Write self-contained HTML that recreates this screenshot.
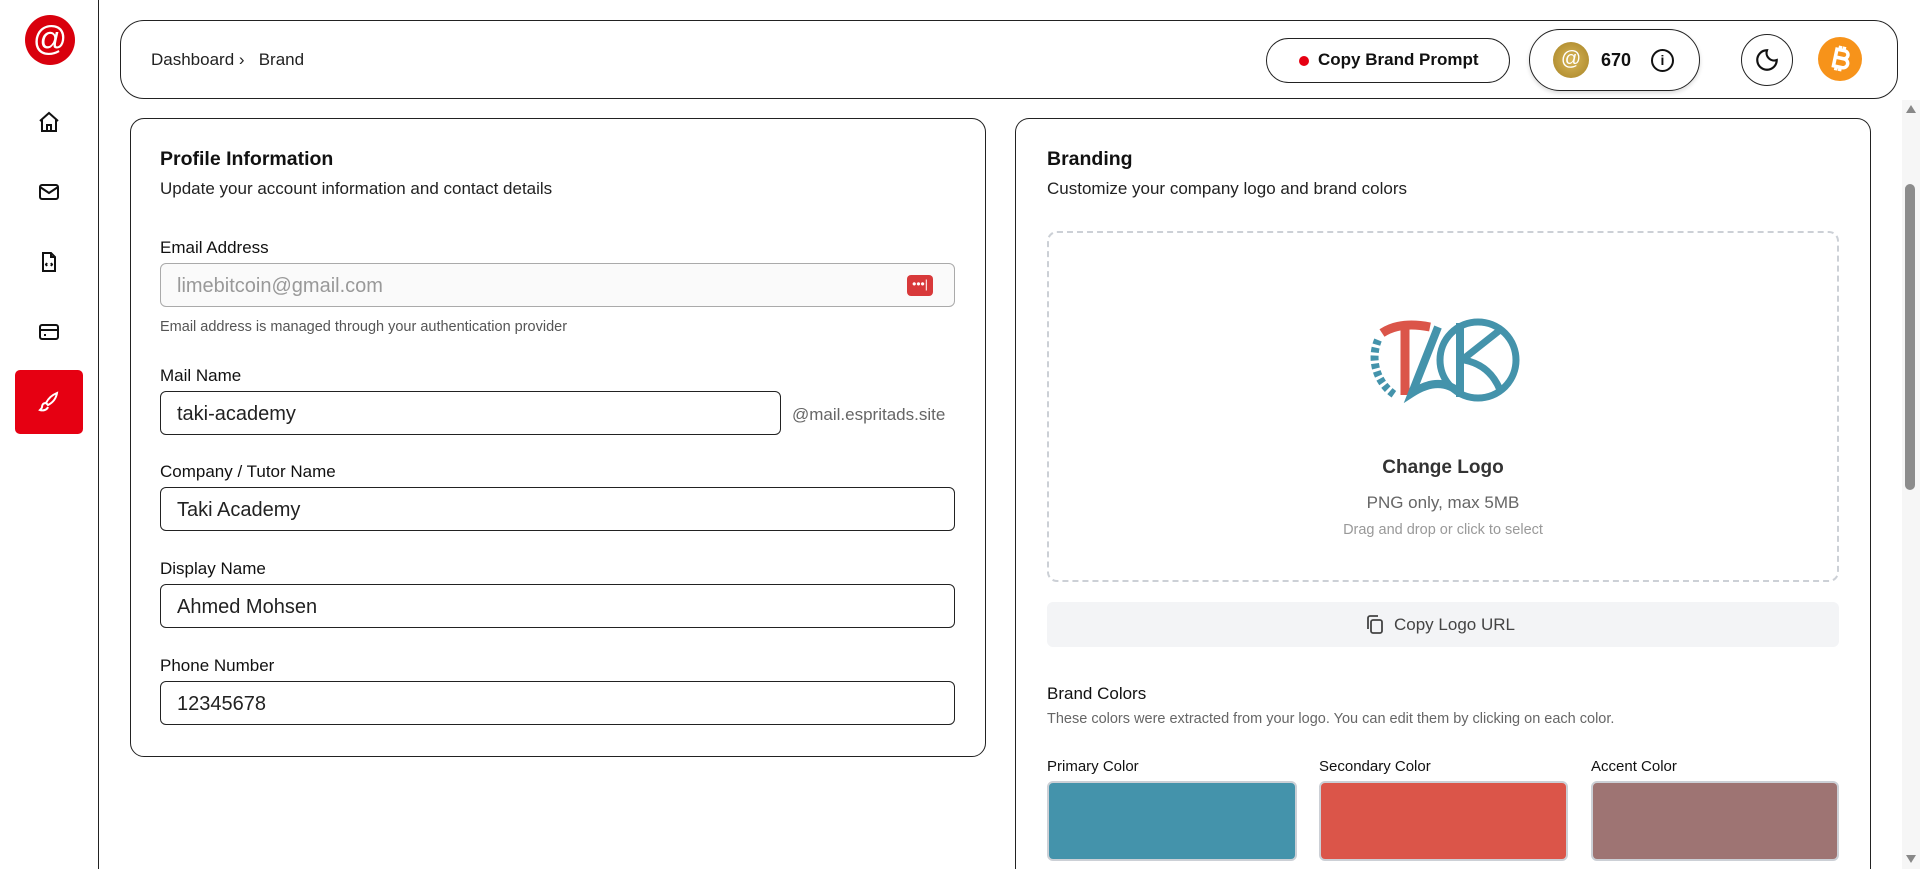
<!DOCTYPE html>
<html><head><meta charset="utf-8"><style>
*{box-sizing:border-box;margin:0;padding:0}
html,body{width:1920px;height:869px;overflow:hidden}
body{background:#fff;font-family:"Liberation Sans",sans-serif;color:#111;position:relative}
.abs{position:absolute}
.side{left:0;top:0;width:99px;height:869px;border-right:1.5px solid #222}
.ico{position:absolute;left:37px;width:24px;height:24px}
.hdr{left:120px;top:20px;width:1778px;height:79px;border:1.5px solid #222;border-radius:24px}
.card{border:1.5px solid #222;border-radius:14px}
.lbl{font-size:17px;color:#111}
.inp{position:absolute;border:1.5px solid #222;border-radius:6px;height:44px;font-size:20px;padding-left:16px;line-height:44px;color:#222}
.t{position:absolute;white-space:nowrap}
</style></head><body>
<div class="abs side">
  <div class="abs" style="left:25px;top:15px;width:50px;height:50px;border-radius:50%;background:#d9000d;color:#fff;font-size:34px;text-align:center;line-height:48px">@</div>
  <svg class="ico" style="top:110px" viewBox="0 0 24 24" fill="none" stroke="#111" stroke-width="2"><path d="M3 11l9-8 9 8M5 9v12h14V9M10 21v-6h4v6"/></svg>
  <svg class="ico" style="top:180px" viewBox="0 0 24 24" fill="none" stroke="#111" stroke-width="2"><rect x="3" y="5" width="18" height="14" rx="2"/><path d="M3 7l9 6 9-6"/></svg>
  <svg class="ico" style="top:250px" viewBox="0 0 24 24" fill="none" stroke="#111" stroke-width="2"><path d="M14 3H6v18h12V7zM14 3v4h4M10 13l-1 1.5 1 1.5M14 13l1 1.5-1 1.5"/></svg>
  <svg class="ico" style="top:320px" viewBox="0 0 24 24" fill="none" stroke="#111" stroke-width="2"><rect x="3" y="5" width="18" height="14" rx="2"/><path d="M3 10h18M7 15h2"/></svg>
  <div class="abs" style="left:15px;top:370px;width:68px;height:64px;background:#e60012;border-radius:5px"></div>
  <svg class="ico" style="top:390px" viewBox="0 0 24 24" fill="none" stroke="#fff" stroke-width="2"><path d="M20 3c-5 2-9 6-11 10l2 2c4-2 8-6 9-12zM9 13c-3 0-4 2-4 4 0 1-1 2-2 3 3 1 7 0 8-3"/></svg>
</div>
<div class="abs hdr"></div>
<div class="t" style="left:151px;top:50px;font-size:17px;color:#222">Dashboard ›&nbsp;&nbsp;&nbsp;Brand</div>
<div class="abs" style="left:1266px;top:38px;width:244px;height:45px;border:1.5px solid #222;border-radius:23px"></div>
<div class="abs" style="left:1299px;top:56px;width:10px;height:10px;border-radius:50%;background:#e60012"></div>
<div class="t" style="left:1318px;top:50px;font-size:17px;font-weight:600">Copy Brand Prompt</div>
<div class="abs" style="left:1529px;top:29px;width:171px;height:62px;border:1.5px solid #222;border-radius:31px;box-shadow:0 2px 4px rgba(0,0,0,.15)"></div>
<div class="abs" style="left:1553px;top:42px;width:36px;height:36px;border-radius:50%;background:radial-gradient(#d8b658,#a78326);color:#fff;text-align:center;line-height:35px;font-size:20px">@</div>
<div class="t" style="left:1601px;top:50px;font-size:18px;font-weight:700">670</div>
<div class="abs" style="left:1651px;top:49px;width:23px;height:23px;border:2px solid #111;border-radius:50%;text-align:center;font-size:14px;line-height:19px;font-weight:700">i</div>
<div class="abs" style="left:1741px;top:34px;width:52px;height:52px;border:1.5px solid #222;border-radius:50%"></div>
<svg class="abs" style="left:1754px;top:47px" width="26" height="26" viewBox="0 0 24 24" fill="none" stroke="#111" stroke-width="2"><path d="M12 3a7 7 0 0 0 9 9 9 9 0 1 1-9-9z"/></svg>
<div class="abs" style="left:1818px;top:37px;width:44px;height:44px;border-radius:50%;background:#f7931a"></div>
<svg class="abs" style="left:1827px;top:44px" width="26" height="30" viewBox="0 0 26 30"><g transform="rotate(12 13 15)" fill="none" stroke="#fff" stroke-width="3.5"><path d="M8 6h8a4 4 0 0 1 0 8H8zM8 14h9a4.5 4.5 0 0 1 0 9H8zM8 5v19M11 2v4M15 2v4M11 23v4M15 23v4"/></g></svg>

<div class="abs card" style="left:130px;top:118px;width:856px;height:639px"></div>
<div class="t" style="left:160px;top:148px;font-size:19.5px;font-weight:600">Profile Information</div>
<div class="t" style="left:160px;top:179px;font-size:17px;color:#222">Update your account information and contact details</div>
<div class="t lbl" style="left:160px;top:238px">Email Address</div>
<div class="inp" style="left:160px;top:263px;width:795px;background:#fafafa;border-color:#aaa;color:#999">limebitcoin@gmail.com</div>
<div class="abs" style="left:907px;top:275px;width:26px;height:21px;background:#d8393a;border-radius:4px;color:#fff;font-size:12px;text-align:center;line-height:18px">•••|</div>
<div class="t" style="left:160px;top:319px;font-size:14.5px;color:#555">Email address is managed through your authentication provider</div>
<div class="t lbl" style="left:160px;top:366px">Mail Name</div>
<div class="inp" style="left:160px;top:391px;width:621px">taki-academy</div>
<div class="t" style="left:792px;top:405px;font-size:17px;color:#666">@mail.espritads.site</div>
<div class="t lbl" style="left:160px;top:462px">Company / Tutor Name</div>
<div class="inp" style="left:160px;top:487px;width:795px">Taki Academy</div>
<div class="t lbl" style="left:160px;top:559px">Display Name</div>
<div class="inp" style="left:160px;top:584px;width:795px">Ahmed Mohsen</div>
<div class="t lbl" style="left:160px;top:656px">Phone Number</div>
<div class="inp" style="left:160px;top:681px;width:795px">12345678</div>

<div class="abs card" style="left:1015px;top:118px;width:856px;height:760px;border-bottom:none;border-bottom-left-radius:0;border-bottom-right-radius:0"></div>
<div class="t" style="left:1047px;top:148px;font-size:19.5px;font-weight:600">Branding</div>
<div class="t" style="left:1047px;top:179px;font-size:17px;color:#222">Customize your company logo and brand colors</div>
<div class="abs" style="left:1047px;top:231px;width:792px;height:351px;border:2px dashed #ccd0d6;border-radius:10px"></div>
<svg class="abs" style="left:1360px;top:305px" width="170" height="100" viewBox="0 0 170 100">
<path d="M22 28 Q40 16 70 22" stroke="#db5549" stroke-width="9" fill="none"/>
<path d="M45 22 L45 90" stroke="#db5549" stroke-width="9"/>
<path d="M78 22 L52 88 Q80 70 100 88" stroke="#4493ab" stroke-width="8" fill="none"/>
<path d="M100 18 L100 92" stroke="#4493ab" stroke-width="8"/>
<circle cx="118" cy="55" r="38" stroke="#4493ab" stroke-width="7" fill="none"/>
<path d="M102 55 L140 25 M104 55 Q130 60 140 85" stroke="#4493ab" stroke-width="7" fill="none"/>
<path d="M18 35 A45 45 0 0 0 35 90" stroke="#4493ab" stroke-width="8" stroke-dasharray="5 3" fill="none"/>
</svg>
<div class="t" style="left:1047px;top:457px;width:792px;text-align:center;font-size:19px;font-weight:700;color:#333">Change Logo</div>
<div class="t" style="left:1047px;top:493px;width:792px;text-align:center;font-size:17px;color:#666">PNG only, max 5MB</div>
<div class="t" style="left:1047px;top:522px;width:792px;text-align:center;font-size:14.5px;color:#999">Drag and drop or click to select</div>
<div class="abs" style="left:1047px;top:602px;width:792px;height:45px;background:#f3f4f6;border-radius:6px"></div>
<svg class="abs" style="left:1365px;top:614px" width="20" height="22" viewBox="0 0 20 22" fill="none" stroke="#444" stroke-width="1.8"><rect x="6" y="6" width="11" height="13" rx="2"/><path d="M3 15V4a2 2 0 0 1 2-2h8"/></svg>
<div class="t" style="left:1394px;top:615px;font-size:17px;color:#444">Copy Logo URL</div>
<div class="t" style="left:1047px;top:684px;font-size:17px;color:#111">Brand Colors</div>
<div class="t" style="left:1047px;top:711px;font-size:14.5px;color:#666">These colors were extracted from your logo. You can edit them by clicking on each color.</div>
<div class="t" style="left:1047px;top:758px;font-size:15px">Primary Color</div>
<div class="t" style="left:1319px;top:758px;font-size:15px">Secondary Color</div>
<div class="t" style="left:1591px;top:758px;font-size:15px">Accent Color</div>
<div class="abs" style="left:1047px;top:781px;width:250px;height:80px;background:#4493ab;border:2px solid #ccd0d6;border-radius:6px"></div>
<div class="abs" style="left:1319px;top:781px;width:249px;height:80px;background:#db5549;border:2px solid #ccd0d6;border-radius:6px"></div>
<div class="abs" style="left:1591px;top:781px;width:248px;height:80px;background:#9e7473;border:2px solid #ccd0d6;border-radius:6px"></div>

<div class="abs" style="left:1902px;top:100px;width:18px;height:769px;background:#f6f6f6"></div>
<div class="abs" style="left:1906px;top:105px;width:0;height:0;border-left:5px solid transparent;border-right:5px solid transparent;border-bottom:8px solid #888"></div>
<div class="abs" style="left:1905px;top:184px;width:10px;height:306px;background:#8c8c8c;border-radius:5px"></div>
<div class="abs" style="left:1906px;top:855px;width:0;height:0;border-left:5px solid transparent;border-right:5px solid transparent;border-top:8px solid #888"></div>
</body></html>
